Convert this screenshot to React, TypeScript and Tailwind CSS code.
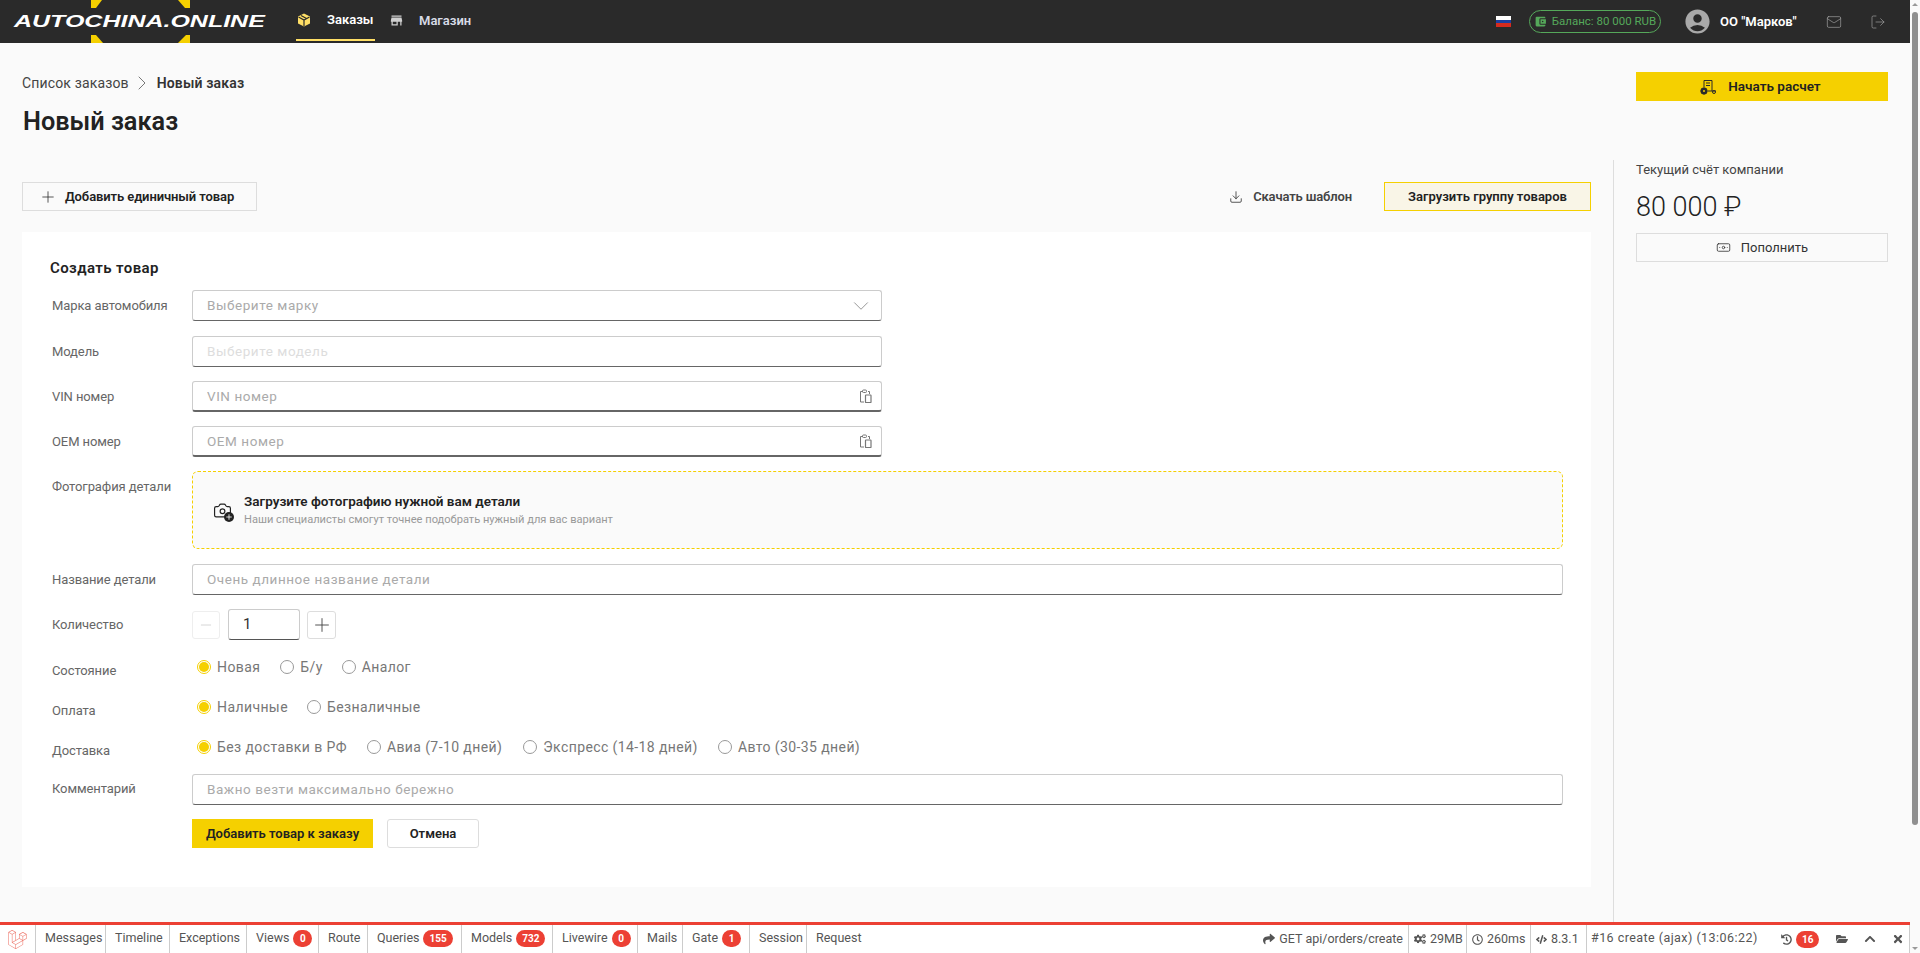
import type { ReactNode } from 'react';
import { ChevronDown, ChevronRight, Download, LogOut, Mail, Minus, Plus, Banknote, Camera } from 'lucide-react';
import { MdAccountBalanceWallet, MdAccountCircle, MdStore } from 'react-icons/md';
import { SiLaravel } from 'react-icons/si';
import { FaChevronUp, FaCode, FaCogs, FaFolderOpen, FaHistory, FaRegClock, FaShare, FaTimes } from 'react-icons/fa';

const font = 'font-["Roboto","Liberation_Sans",sans-serif]';

function PasteIcon() {
  return (
    <svg width="13" height="14" viewBox="0 0 13 14" fill="none" stroke="#777" strokeWidth="1">
      <path d="M4 2.5H1.5v10.5H5M9 2.5h1.5V5" />
      <rect x="3.5" y="1" width="4" height="2.5" rx="1" />
      <rect x="6.5" y="6" width="5.5" height="7.5" rx="0.5" strokeWidth="1.2" />
    </svg>
  );
}

function BoxIcon() {
  return (
    <svg width="14" height="14" viewBox="0 0 14 14">
      <path d="M7 0.5l6 3v7l-6 3-6-3v-7z" fill="#ffdf66" />
      <path d="M1.5 4L7 7l5.5-3M7 7v6M4 2.5l5.5 3" stroke="#2a2a2a" strokeWidth="1.2" fill="none" />
    </svg>
  );
}

function CalcIcon() {
  return (
    <svg width="17" height="16" viewBox="0 0 17 16" fill="none" stroke="#2b2b2b" strokeWidth="1">
      <path d="M4 8V1.5h8V12h4M12 12H8" />
      <path d="M6 4h4M6 6.5h4" />
      <circle cx="4" cy="12" r="3.2" fill="#2b2b2b" />
      <circle cx="4" cy="12" r="1" fill="#f5d000" stroke="none" />
      <circle cx="14" cy="13" r="1.5" />
    </svg>
  );
}

function Logo() {
  return (
    <div className="relative w-[296px] h-[43px] shrink-0 overflow-hidden">
      <svg className="absolute left-0 top-0" width="296" height="43" viewBox="0 0 296 43">
        <path d="M91 0h11l-6 8h-5zM178 0h12v8h-5zM91 35h5l7 8H91zM186 35h4v8h-12z" fill="#f5d000" />
      </svg>
      <span className='absolute left-[14px] top-[11px] origin-left scale-x-[1.47] font-["Liberation_Sans",sans-serif] text-[17px] leading-[21px] font-bold italic text-white whitespace-nowrap'>
        AUTOCHINA.ONLINE
      </span>
    </div>
  );
}

function Header() {
  return (
    <header className="h-[43px] shrink-0 bg-[#2a2a2a] flex items-center text-white">
      <Logo />
      <nav className="flex h-full text-[13px] font-semibold">
        <a className="h-[41px] w-[79px] border-b-2 border-[#ffdf66] flex items-center gap-[16px] pl-px">
          <BoxIcon />
          <span>Заказы</span>
        </a>
        <a className="h-[41px] ml-[14px] flex items-center gap-[15px] text-[#d7dbe6]">
          <MdStore size={15} className="text-[#d0d0d0]" />
          <span>Магазин</span>
        </a>
      </nav>
      <div className="ml-auto flex items-center pr-[24px]">
        <div className="w-[15px] h-[11px] flex flex-col">
          <div className="h-1/3 bg-white" />
          <div className="h-1/3 bg-[#1c3fa0]" />
          <div className="h-1/3 bg-[#d52b1e]" />
        </div>
        <div className="ml-[18px] w-[132px] h-[23px] rounded-full border border-[#55a85a] flex items-center justify-center gap-[5px] text-[11.5px] text-[#55a85a]">
          <MdAccountBalanceWallet size={13} />
          <span>Баланс: 80 000 RUB</span>
        </div>
        <MdAccountCircle size={29} className="ml-[22px] text-[#a9a9a9]" />
        <span className="ml-[8px] w-[86px] text-[13px] font-semibold">ОО "Марков"</span>
        <Mail size={16} strokeWidth={1} className="ml-[20px] text-[#a5a5a5]" />
        <LogOut size={16} strokeWidth={1} className="ml-[28px] text-[#a5a5a5]" />
      </div>
    </header>
  );
}

function Row({ label, className, labelClass, children }: { label: string; className: string; labelClass: string; children: ReactNode }) {
  return (
    <div className={`flex pl-[30px] pr-[28px] ${className}`}>
      <label className={`w-[140px] shrink-0 text-[13px] leading-[20px] tracking-[-0.1px] text-[#666] ${labelClass}`}>{label}</label>
      <div className="flex-1 min-w-0">{children}</div>
    </div>
  );
}

function Field({ placeholder, thick, faint, wide, icon }: { placeholder: string; thick?: boolean; faint?: boolean; wide?: boolean; icon?: ReactNode }) {
  return (
    <div
      className={`flex items-center h-[31px] bg-white border border-[#ccc] rounded-[3px] pl-[14px] pr-[9px] ${wide ? 'w-full' : 'w-[690px]'} ${thick ? 'border-b-2 border-b-[#666]' : 'border-b-[#666]'}`}
    >
      <input
        placeholder={placeholder}
        className={`flex-1 min-w-0 bg-transparent outline-none text-[13.5px] tracking-[0.55px] ${faint ? 'placeholder:text-[#ddd]' : 'placeholder:text-[#aaa]'}`}
      />
      {icon}
    </div>
  );
}

function Radio({ text, on, className }: { text: string; on?: boolean; className: string }) {
  return (
    <div className={`flex items-center gap-[6px] text-[14px] tracking-[0.4px] leading-[20px] text-[#777] ${className}`}>
      <span className={`w-[14px] h-[14px] rounded-full border flex items-center justify-center ${on ? 'border-[#f5d000]' : 'border-[#999]'}`}>
        {on && <span className="w-[10px] h-[10px] rounded-full bg-[#f5d000]" />}
      </span>
      <span>{text}</span>
    </div>
  );
}

function ProductForm() {
  return (
    <section className="mt-[21px] h-[655px] bg-white pt-[26px]">
      <h2 className="pl-[28px] text-[15px] leading-[20px] font-semibold tracking-[0.4px] text-[#222]">Создать товар</h2>

      <Row label="Марка автомобиля" className="mt-[12px] items-center" labelClass="">
        <Field placeholder="Выберите марку" icon={<ChevronDown size={26} strokeWidth={0.8} className="text-[#888] -mr-[2px]" />} />
      </Row>
      <Row label="Модель" className="mt-[15px] items-center" labelClass="">
        <Field placeholder="Выберите модель" faint />
      </Row>
      <Row label="VIN номер" className="mt-[14px] items-center" labelClass="">
        <Field placeholder="VIN номер" thick icon={<PasteIcon />} />
      </Row>
      <Row label="OEM номер" className="mt-[14px] items-center" labelClass="">
        <Field placeholder="OEM номер" thick icon={<PasteIcon />} />
      </Row>

      <Row label="Фотография детали" className="mt-[14px]" labelClass="pt-[6px]">
        <div className="h-[78px] rounded-[6px] border border-dashed border-[#f5d000] bg-[#fafafa] flex items-center pl-[20px]">
          <div className="relative w-[19px] h-[19px]">
            <Camera size={19} strokeWidth={1.5} className="text-[#222]" />
            <span className="absolute right-[-2px] bottom-[-2px] w-[10px] h-[10px] rounded-full bg-[#222] text-white flex items-center justify-center">
              <Plus size={8} strokeWidth={2.5} />
            </span>
          </div>
          <div className="ml-[12px]">
            <div className="text-[13.5px] leading-[17px] font-semibold text-[#222]">Загрузите фотографию нужной вам детали</div>
            <div className="text-[11.1px] leading-[15px] text-[#999] mt-[2px]">Наши специалисты смогут точнее подобрать нужный для вас вариант</div>
          </div>
        </div>
      </Row>

      <Row label="Название детали" className="mt-[15px] items-center" labelClass="">
        <Field placeholder="Очень длинное название детали" wide />
      </Row>

      <Row label="Количество" className="mt-[14px] items-center" labelClass="">
        <div className="flex items-center">
          <button className="w-[28px] h-[28px] rounded-[3px] border border-[#eee] flex items-center justify-center text-[#ccc]">
            <Minus size={16} strokeWidth={1.2} />
          </button>
          <div className="ml-[8px] w-[72px] h-[31px] border border-[#ccc] border-b-[#555] rounded-[3px] pl-[14px] flex items-center text-[15px] text-[#333]">1</div>
          <button className="ml-[7px] w-[29px] h-[28px] rounded-[3px] border border-[#ddd] flex items-center justify-center text-[#444]">
            <Plus size={22} strokeWidth={1} />
          </button>
        </div>
      </Row>

      <Row label="Состояние" className="mt-[17px]" labelClass="pt-[4px]">
        <div className="flex pl-[5px]">
          <Radio text="Новая" on className="" />
          <Radio text="Б/у" className="ml-[20px]" />
          <Radio text="Аналог" className="ml-[19px]" />
        </div>
      </Row>
      <Row label="Оплата" className="mt-[16px]" labelClass="pt-[4px]">
        <div className="flex pl-[5px]">
          <Radio text="Наличные" on className="" />
          <Radio text="Безналичные" className="ml-[19px]" />
        </div>
      </Row>
      <Row label="Доставка" className="mt-[16px]" labelClass="pt-[4px]">
        <div className="flex pl-[5px]">
          <Radio text="Без доставки в РФ" on className="" />
          <Radio text="Авиа (7-10 дней)" className="ml-[20px]" />
          <Radio text="Экспресс (14-18 дней)" className="ml-[21px]" />
          <Radio text="Авто (30-35 дней)" className="ml-[20px]" />
        </div>
      </Row>

      <Row label="Комментарий" className="mt-[13px] items-start" labelClass="pt-[5px]">
        <Field placeholder="Важно везти максимально бережно" wide />
      </Row>

      <div className="mt-[14px] ml-[170px] flex text-[13px] font-semibold text-[#222]">
        <button className="w-[181px] h-[29px] bg-[#f5d000]">Добавить товар к заказу</button>
        <button className="ml-[14px] w-[92px] h-[29px] bg-white border border-[#ddd] rounded-[3px]">Отмена</button>
      </div>
    </section>
  );
}

const tabs: { name: string; width: string; count?: string; last?: boolean }[] = [
  { name: 'Messages', width: 'w-[70px]' },
  { name: 'Timeline', width: 'w-[64px]' },
  { name: 'Exceptions', width: 'w-[77px]' },
  { name: 'Views', width: 'w-[72px]', count: '0' },
  { name: 'Route', width: 'w-[49px]' },
  { name: 'Queries', width: 'w-[94px]', count: '155' },
  { name: 'Models', width: 'w-[91px]', count: '732' },
  { name: 'Livewire', width: 'w-[85px]', count: '0' },
  { name: 'Mails', width: 'w-[45px]' },
  { name: 'Gate', width: 'w-[67px]', count: '1' },
  { name: 'Session', width: 'w-[57px]' },
  { name: 'Request', width: 'w-[70px]', last: true },
];

function Badge({ value }: { value: string }) {
  return (
    <span className="ml-[4px] h-[17px] min-w-[19px] px-[6px] rounded-full bg-[#ec4034] text-white text-[10px] font-bold flex items-center justify-center">
      {value}
    </span>
  );
}

function DebugBar() {
  return (
    <div className="absolute left-0 bottom-0 w-full h-[31px] bg-white border-t-[3px] border-[#ec4034] flex text-[12.5px] text-[#555]">
      <div className="w-[36px] shrink-0 flex items-center justify-center border-r border-[#ccc]">
        <SiLaravel size={19} className="text-[#ee7f74]" />
      </div>
      {tabs.map((tab) => (
        <div key={tab.name} className={`${tab.width} shrink-0 flex items-center pl-[9px] pb-[2px] ${tab.last ? '' : 'border-r border-[#ccc]'}`}>
          {tab.name}
          {tab.count && <Badge value={tab.count} />}
        </div>
      ))}
      <div className="ml-auto flex">
        <div className="flex items-center gap-[4px] pr-[5px] border-r border-[#ccc]"><FaShare size={12} />GET api/orders/create</div>
        <div className="w-[58px] flex items-center gap-[4px] pl-[5px] border-r border-[#ccc]"><FaCogs size={12} />29MB</div>
        <div className="w-[64px] flex items-center gap-[4px] pl-[5px] border-r border-[#ccc]"><FaRegClock size={11} />260ms</div>
        <div className="w-[56px] flex items-center gap-[4px] pl-[5px] border-r border-[#ccc]"><FaCode size={11} />8.3.1</div>
        <div className="w-[183px] flex items-center pl-[4px] pb-[1px] tracking-[0.45px]">#16 create (ajax) (13:06:22)</div>
        <div className="w-[140px] flex items-center justify-between pl-[11px] pr-[5px] border-r border-[#ccc]">
          <div className="flex items-center">
            <FaHistory size={11} />
            <Badge value="16" />
          </div>
          <FaFolderOpen size={12} />
          <FaChevronUp size={12} />
          <FaTimes size={12} />
        </div>
      </div>
    </div>
  );
}

function Scrollbar() {
  return (
    <div className="w-[10px] shrink-0 bg-[#fafafa] flex flex-col items-center">
      <div className="mt-[3px] w-0 h-0 border-x-[3px] border-x-transparent border-b-[3px] border-b-[#999]" />
      <div className="mt-[6px] w-[6px] h-[813px] rounded-[3px] bg-[#8f8f8f]" />
      <div className="mt-auto mb-[3px] w-0 h-0 border-x-[3px] border-x-transparent border-t-[3px] border-t-[#999]" />
    </div>
  );
}

export default function App() {
  return (
    <div className={`flex h-[953px] overflow-hidden bg-[#fafafa] text-[#222] ${font}`}>
      <div className="relative w-[1910px] shrink-0 flex flex-col">
        <Header />

        <div className="h-[117px] shrink-0 flex justify-between px-[22px]">
          <div className="pt-[30px]">
            <div className="flex items-center text-[14px] leading-[20px] tracking-[0.15px] text-[#444]">
              Список заказов
              <ChevronRight size={24} strokeWidth={1} className="ml-[1px] mr-[3px] -my-[4px] text-[#777]" />
              <span className="font-semibold text-[#333]">Новый заказ</span>
            </div>
            <h1 className="mt-[13px] ml-px text-[25.3px] leading-[32px] font-semibold text-[#222]">Новый заказ</h1>
          </div>
          <button className="mt-[29px] w-[252px] h-[29px] bg-[#f5d000] flex items-center justify-center gap-[11px] pr-[3px] text-[13.5px] font-semibold">
            <CalcIcon />
            Начать расчет
          </button>
        </div>

        <div className="flex flex-1">
          <main className="w-[1614px] shrink-0 border-r border-[#ddd] pt-[22px] pl-[22px] pr-[22px]">
            <div className="flex justify-between">
              <button className="w-[235px] h-[29px] border border-[#ddd] flex items-center pl-[16px] gap-[8px] text-[13px] tracking-[-0.1px] font-semibold">
                <Plus size={18} strokeWidth={1} />
                Добавить единичный товар
              </button>
              <div className="flex items-center text-[13px] font-semibold">
                <Download size={14} strokeWidth={1.3} className="text-[#222]" />
                <span className="ml-[10px] tracking-[-0.15px] text-[#444]">Скачать шаблон</span>
                <button className="ml-[32px] w-[207px] h-[29px] bg-[#f9f5e7] border border-[#f5d000]">Загрузить группу товаров</button>
              </div>
            </div>
            <ProductForm />
          </main>

          <aside className="w-[252px] ml-[22px]">
            <div className="text-[13px] leading-[20px] text-[#444]">Текущий счёт компании</div>
            <div className="mt-[9px] text-[27px] leading-[36px] font-light text-[#222]">80 000 ₽</div>
            <button className="mt-[8px] w-full h-[29px] border border-[#ddd] flex items-center justify-center gap-[10px] text-[13px] text-[#333]">
              <Banknote size={15} strokeWidth={1.3} />
              Пополнить
            </button>
          </aside>
        </div>

        <DebugBar />
      </div>
      <Scrollbar />
    </div>
  );
}
